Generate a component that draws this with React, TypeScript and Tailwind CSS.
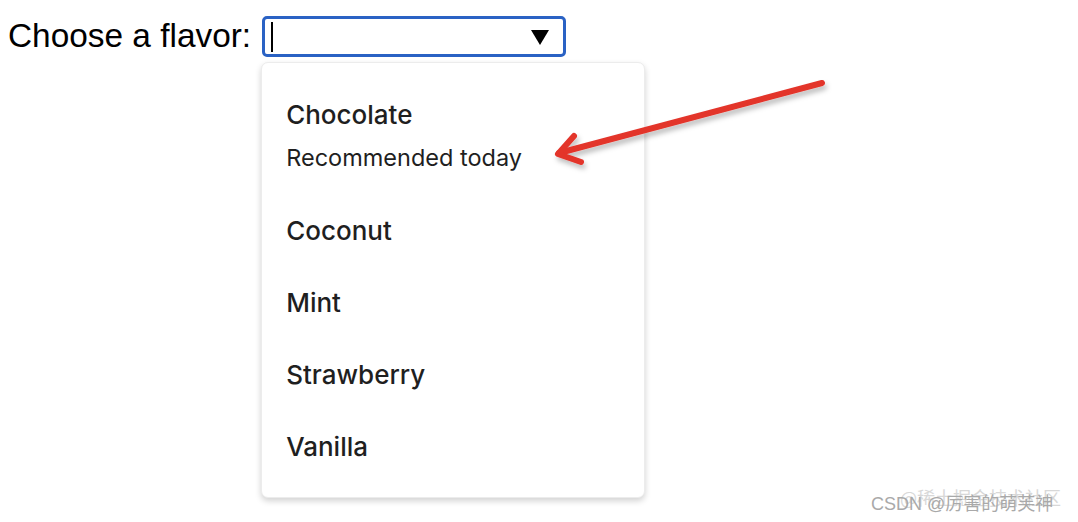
import React from "react";

const flavors = ["Coconut", "Mint", "Strawberry", "Vanilla"];

export default function App() {
  return (
    <div className="relative w-[1078px] h-[522px] bg-white overflow-hidden">
      <div className="flex items-start pt-[16px] pl-[8px]">
        <label className="text-[33.4px] leading-[39px] text-black mr-[11px] whitespace-nowrap" style={{ fontFamily: '"Liberation Sans", Arial, sans-serif' }}>
          Choose a flavor:
        </label>
        <div className="relative">
          <div className="w-[304px] h-[41px] border-[3px] border-[#2a62c4] rounded-[5px] flex items-center justify-between pl-[6px] pr-[14px]">
            <span className="w-[2px] h-[30px] bg-black" />
            <svg width="18" height="16" viewBox="0 0 18 16">
              <polygon points="0,1 18,1 9,16" fill="#000" />
            </svg>
          </div>
          <div
            className="absolute left-[-1px] top-[46px] w-[384px] h-[436px] bg-white rounded-[7px] border border-[#ececec] shadow-[0_3px_6px_rgba(0,0,0,0.18)] pt-[35px] pl-[24px] text-[#1f1f1f]"
            style={{ fontFamily: 'Inter, "Noto Sans", sans-serif' }}
          >
            <div className="text-[26px] font-medium leading-[34px]">Chocolate</div>
            <div className="text-[23.5px] leading-[34px] mt-[9px]">Recommended today</div>
            <div className="flex flex-col mt-[39px] gap-[38px]">
              {flavors.map((f) => (
                <div key={f} className="text-[26px] font-medium leading-[34px]">
                  {f}
                </div>
              ))}
            </div>
          </div>
        </div>
      </div>

      <svg className="absolute left-0 top-0" width="1078" height="522" viewBox="0 0 1078 522">
        <defs>
          <filter id="sh" x="-10%" y="-10%" width="120%" height="130%">
            <feDropShadow dx="2" dy="4" stdDeviation="2.5" floodColor="#000" floodOpacity="0.25" />
          </filter>
        </defs>
        <g filter="url(#sh)" stroke="#e3342b" strokeWidth="6" strokeLinecap="round" strokeLinejoin="round" fill="none">
          <path d="M822 83 L559 153" />
          <path d="M574 136 L558 154 L581 162" />
        </g>
      </svg>

      <div className="absolute left-[900px] top-[484px] text-[18px] text-[#d8d8d8] whitespace-nowrap" style={{ fontFamily: '"Noto Sans CJK SC", sans-serif' }}>
        @稀土掘金技术社区
      </div>
      <div className="absolute left-[871px] top-[491px] text-[18px] text-[#a9a9a9] whitespace-nowrap" style={{ fontFamily: '"Liberation Sans", "Noto Sans CJK SC", sans-serif' }}>
        CSDN @厉害的萌芙神
      </div>
    </div>
  );
}
